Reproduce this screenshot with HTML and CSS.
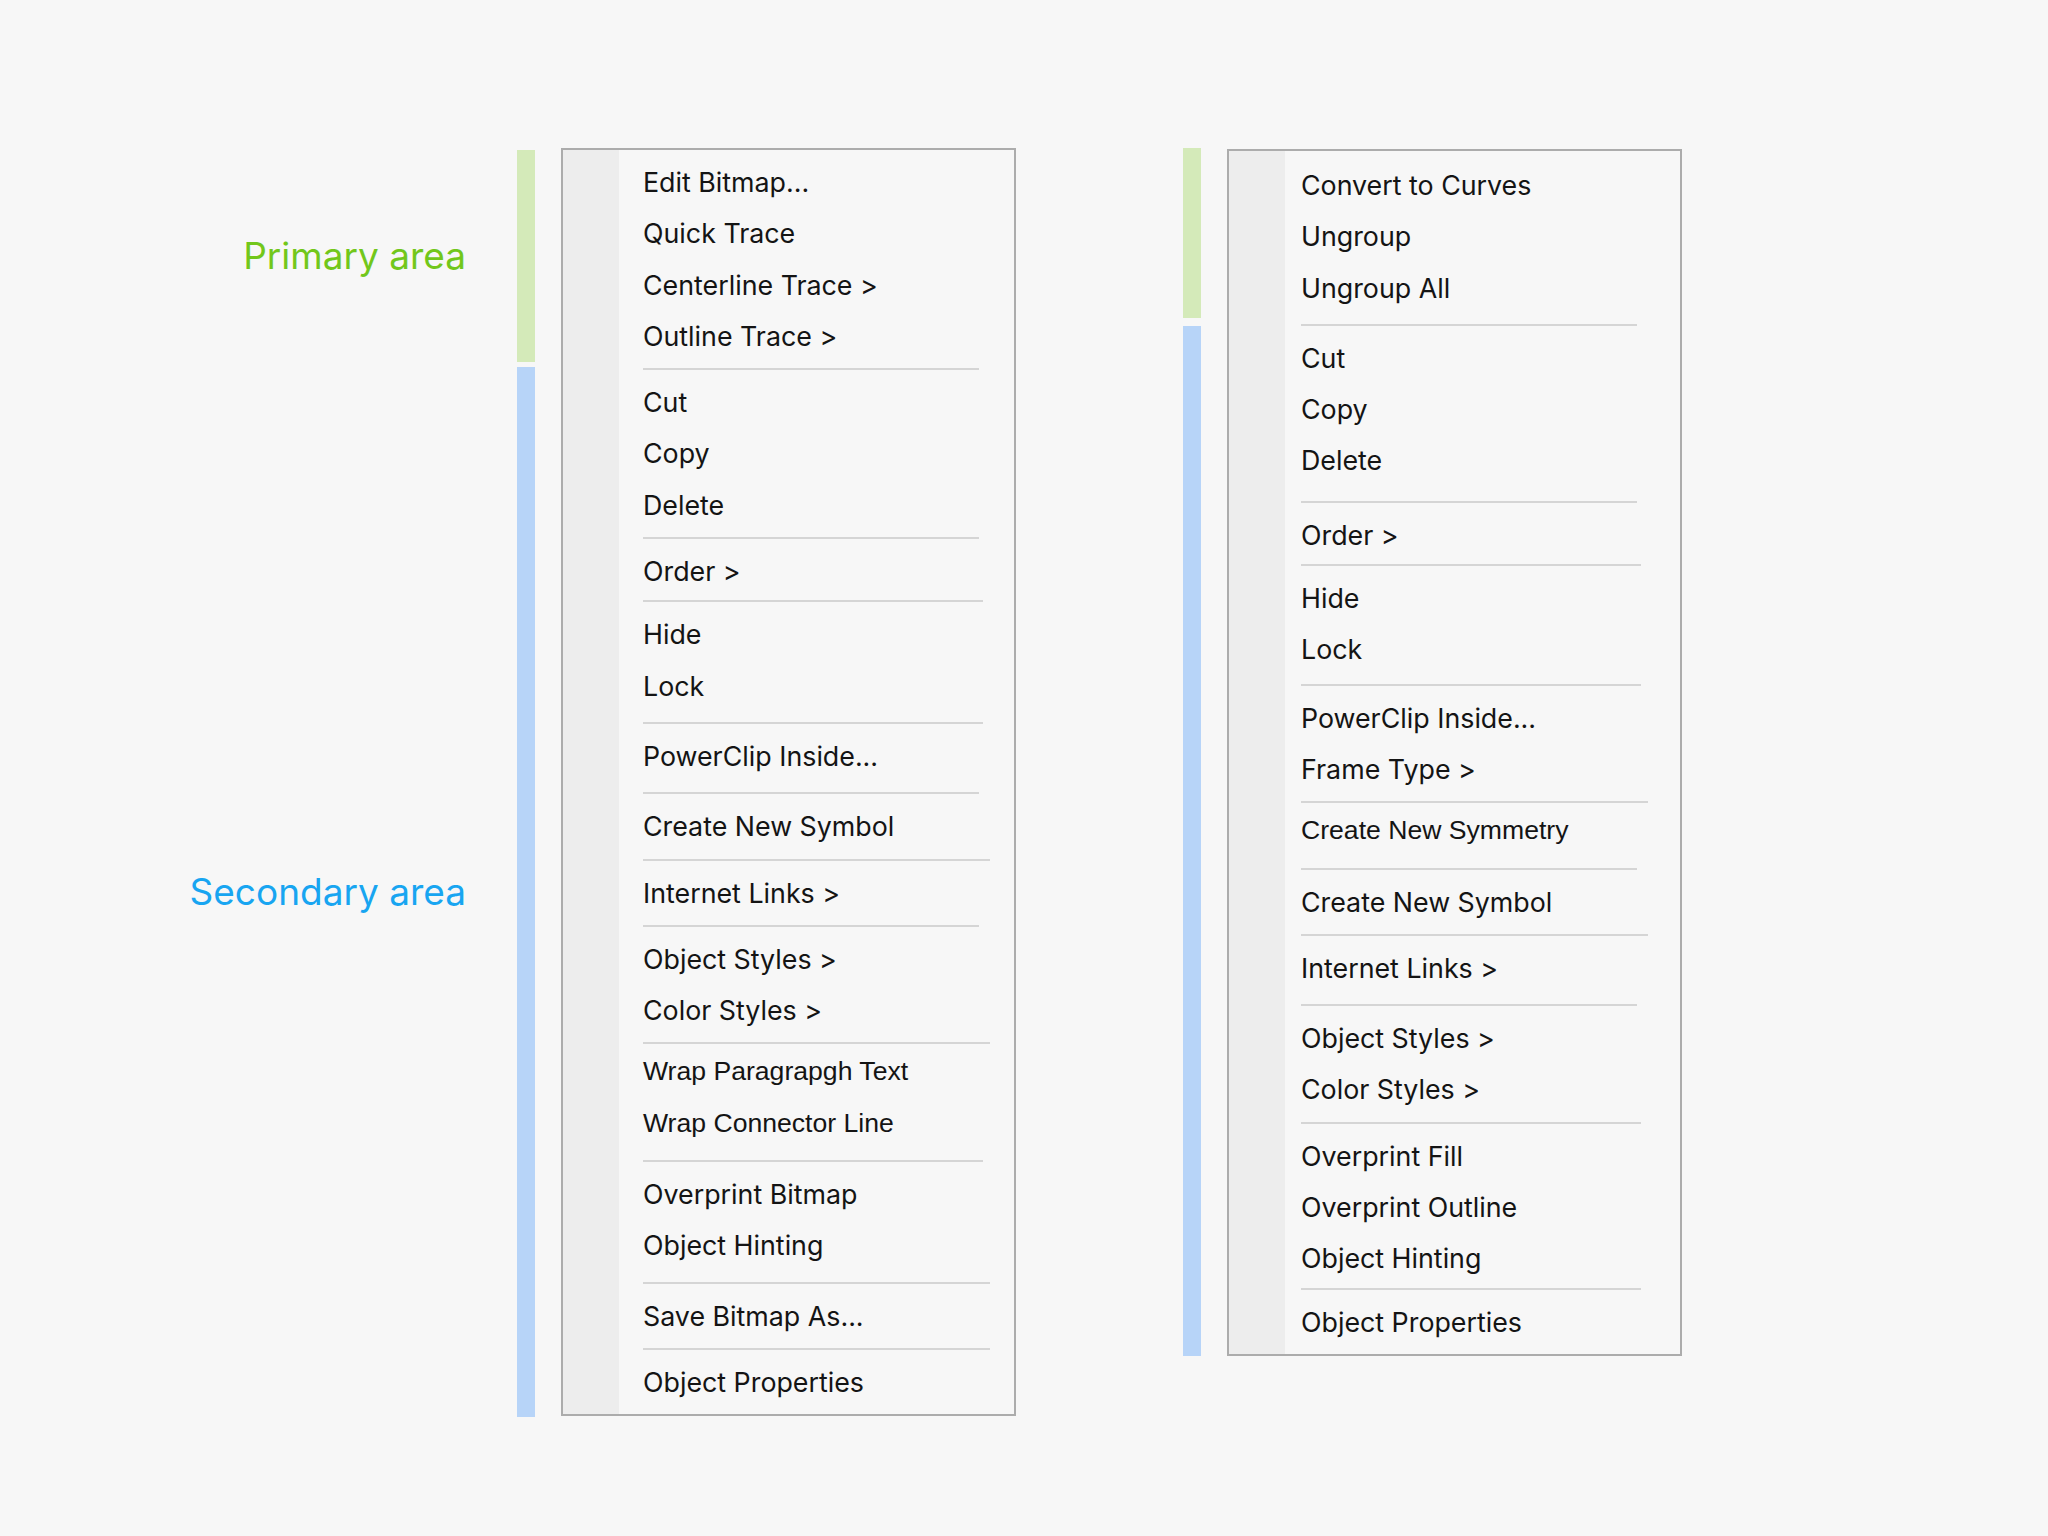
FILE: index.html
```html
<!DOCTYPE html>
<html lang="en">
<head>
<meta charset="utf-8">
<title>Context menu areas</title>
<link rel="stylesheet" href="styles.css">
</head>
<body>
<main class="page">
  <section class="group">
    <div class="legend legend--a">
      <div class="label label--primary">Primary area</div>
      <div class="bar bar--primary"></div>
      <div class="label label--secondary">Secondary area</div>
      <div class="bar bar--secondary"></div>
    </div>
    <div class="menu menu--a">
      <div class="gutter"></div>
      <div class="list">
        <div class="item">Edit Bitmap...</div>
        <div class="item">Quick Trace</div>
        <div class="item">Centerline Trace &gt;</div>
        <div class="item">Outline Trace &gt;</div>
        <div class="sep short"></div>
        <div class="item">Cut</div>
        <div class="item">Copy</div>
        <div class="item">Delete</div>
        <div class="sep short"></div>
        <div class="item">Order &gt;</div>
        <div class="sep near"></div>
        <div class="item">Hide</div>
        <div class="item">Lock</div>
        <div class="sep far"></div>
        <div class="item">PowerClip Inside...</div>
        <div class="sep far short"></div>
        <div class="item">Create New Symbol</div>
        <div class="sep long"></div>
        <div class="item">Internet Links &gt;</div>
        <div class="sep short"></div>
        <div class="item">Object Styles &gt;</div>
        <div class="item">Color Styles &gt;</div>
        <div class="sep long"></div>
        <div class="item alt">Wrap Paragrapgh Text</div>
        <div class="item alt">Wrap Connector Line</div>
        <div class="sep"></div>
        <div class="item">Overprint Bitmap</div>
        <div class="item">Object Hinting</div>
        <div class="sep far long"></div>
        <div class="item">Save Bitmap As...</div>
        <div class="sep long"></div>
        <div class="item">Object Properties</div>
      </div>
    </div>
  </section>

  <section class="group">
    <div class="legend legend--b">
      <div class="bar bar--primary"></div>
      <div class="bar bar--secondary"></div>
    </div>
    <div class="menu menu--b">
      <div class="gutter"></div>
      <div class="list">
        <div class="item">Convert to Curves</div>
        <div class="item">Ungroup</div>
        <div class="item">Ungroup All</div>
        <div class="sep far short"></div>
        <div class="item">Cut</div>
        <div class="item">Copy</div>
        <div class="item">Delete</div>
        <div class="sep farther short"></div>
        <div class="item">Order &gt;</div>
        <div class="sep near"></div>
        <div class="item">Hide</div>
        <div class="item">Lock</div>
        <div class="sep mid"></div>
        <div class="item">PowerClip Inside...</div>
        <div class="item">Frame Type &gt;</div>
        <div class="sep long"></div>
        <div class="item alt">Create New Symmetry</div>
        <div class="sep short"></div>
        <div class="item">Create New Symbol</div>
        <div class="sep long"></div>
        <div class="item">Internet Links &gt;</div>
        <div class="sep far short"></div>
        <div class="item">Object Styles &gt;</div>
        <div class="item">Color Styles &gt;</div>
        <div class="sep"></div>
        <div class="item">Overprint Fill</div>
        <div class="item">Overprint Outline</div>
        <div class="item">Object Hinting</div>
        <div class="sep near"></div>
        <div class="item">Object Properties</div>
      </div>
    </div>
  </section>
</main>
</body>
</html>
```

FILE: styles.css
```css
* {
  box-sizing: border-box;
}

html,
body {
  margin: 0;
  padding: 0;
  background: #f7f7f7;
}

body {
  width: 2048px;
  height: 1536px;
  font-family: Inter, "Noto Sans", "Liberation Sans", sans-serif;
  color: #141414;
}

.page {
  display: flex;
  align-items: flex-start;
  gap: 167px;
  padding: 148px 0 0 136px;
}

.group {
  display: flex;
  align-items: flex-start;
  gap: 26px;
}

/* ---------- legend (labels + coloured bars) ---------- */

.legend {
  display: grid;
}

.legend--a {
  grid-template-columns: 330px 18px;
  grid-template-rows: 212px 1050px;
  column-gap: 51px;
  row-gap: 5px;
  margin-top: 2px;
}

.legend--b {
  grid-template-columns: 18px;
  grid-template-rows: 170px 1030px;
  row-gap: 8px;
}

.label {
  align-self: center;
  text-align: right;
  font-size: 37px;
  line-height: 1.2;
  white-space: nowrap;
}

.label--primary {
  color: #72c71b;
}

.label--secondary {
  color: #18a5f1;
}

.bar--primary {
  background: #d4eab9;
}

.bar--secondary {
  background: #b7d4f8;
}

/* ---------- menu ---------- */

.menu {
  display: flex;
  width: 455px;
  border: 2px solid #acacac;
  background: #f7f7f7;
}

.menu--b {
  margin-top: 1px;
}

.gutter {
  flex: 0 0 56px;
  background: #ededed;
}

.list {
  display: flex;
  flex-direction: column;
  padding: 7px 0 6px 24px;
}

.menu--b .list {
  padding: 9px 0 6px 16px;
}

.item {
  font-size: 26.8px;
  line-height: 51.3px;
  height: 51.3px;
  white-space: nowrap;
}

.item.alt {
  font-family: "Liberation Sans", Arial, sans-serif;
  font-size: 26.6px;
  margin-top: -5px;
  padding-bottom: 5px;
  height: 56.3px;
}

.sep {
  width: 340px;
  height: 2px;
  background: #d5d5d5;
  margin: 6px 0 7px;
}

.sep.near {
  margin-top: 3px;
}

.sep.mid {
  margin-top: 8px;
}

.sep.far {
  margin-top: 10px;
}

.sep.farther {
  margin-top: 14px;
}

.sep.short {
  width: 336px;
}

.sep.long {
  width: 347px;
}
```
